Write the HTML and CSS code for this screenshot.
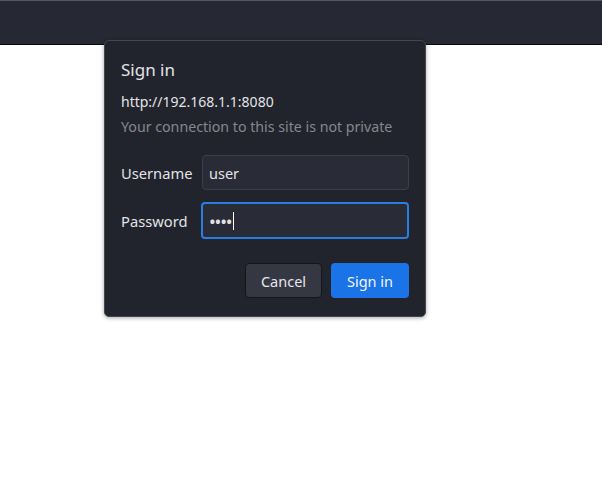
FILE: index.html
```html
<!DOCTYPE html>
<html>
<head>
<meta charset="utf-8">
<link rel="stylesheet" href="styles.css">
</head>
<body>
<div class="toolbar"></div>
<div class="dialog">
  <div class="title">Sign in</div>
  <div class="origin">http://192.168.1.1:8080</div>
  <div class="note">Your connection to this site is not private</div>
  <div class="fields">
    <label class="label">Username</label>
    <div class="input">user</div>
    <label class="label">Password</label>
    <div class="input focused"><span class="dots">••••</span><span class="caret"></span></div>
  </div>
  <div class="actions">
    <button class="btn cancel">Cancel</button>
    <button class="btn primary">Sign in</button>
  </div>
</div>
</body>
</html>
```
FILE: styles.css
```css
html, body {
  margin: 0;
  padding: 0;
  background: #ffffff;
  font-family: "Noto Sans", "Open Sans", sans-serif;
}
.toolbar {
  height: 43px;
  background: #262833;
  border-top: 1px solid #55575d;
  border-bottom: 1px solid #08090b;
}
.dialog {
  position: absolute;
  left: 104px;
  top: 40px;
  width: 288px;
  padding: 14px 16px 18px 16px;
  background: #22242d;
  border: 1px solid #45474e;
  border-radius: 5px;
  box-shadow: 0 1px 4px rgba(0, 0, 0, 0.35);
  color: #e3e3e6;
}
.title {
  font-size: 17px;
  line-height: 30px;
}
.origin {
  font-size: 14px;
  line-height: 20px;
  margin-top: 7px;
}
.note {
  font-size: 14.2px;
  line-height: 20px;
  margin-top: 5px;
  color: #85878e;
}
.fields {
  display: grid;
  grid-template-columns: 81px 1fr;
  row-gap: 12px;
  align-items: center;
  margin-top: 18px;
}
.label {
  font-size: 14.7px;
}
.input {
  height: 35px;
  box-sizing: border-box;
  border: 1px solid #3d3f48;
  border-radius: 4px;
  background: #292b36;
  padding: 0 6px;
  font-size: 14.5px;
  display: flex;
  align-items: center;
}
.input.focused {
  height: 37px;
  border: 2px solid #2a7de1;
  margin-left: -1px;
  padding-left: 6px;
}
.dots {
  font-size: 18px;
  letter-spacing: -1.2px;
}
.caret {
  display: inline-block;
  width: 1px;
  height: 18px;
  background: #ffffff;
  margin-left: 2px;
}
.actions {
  display: flex;
  justify-content: flex-end;
  gap: 9px;
  margin-top: 24px;
}
.btn {
  font-family: "Noto Sans", "Open Sans", sans-serif;
  font-size: 14.5px;
  height: 35px;
  border-radius: 4px;
  color: #e6e6ea;
  padding: 0 8px;
}
.cancel {
  width: 77px;
  background: #353743;
  border: 1px solid #14151a;
}
.primary {
  width: 78px;
  background: #1b73e8;
  border: none;
  color: #f2f6ff;
}
```
